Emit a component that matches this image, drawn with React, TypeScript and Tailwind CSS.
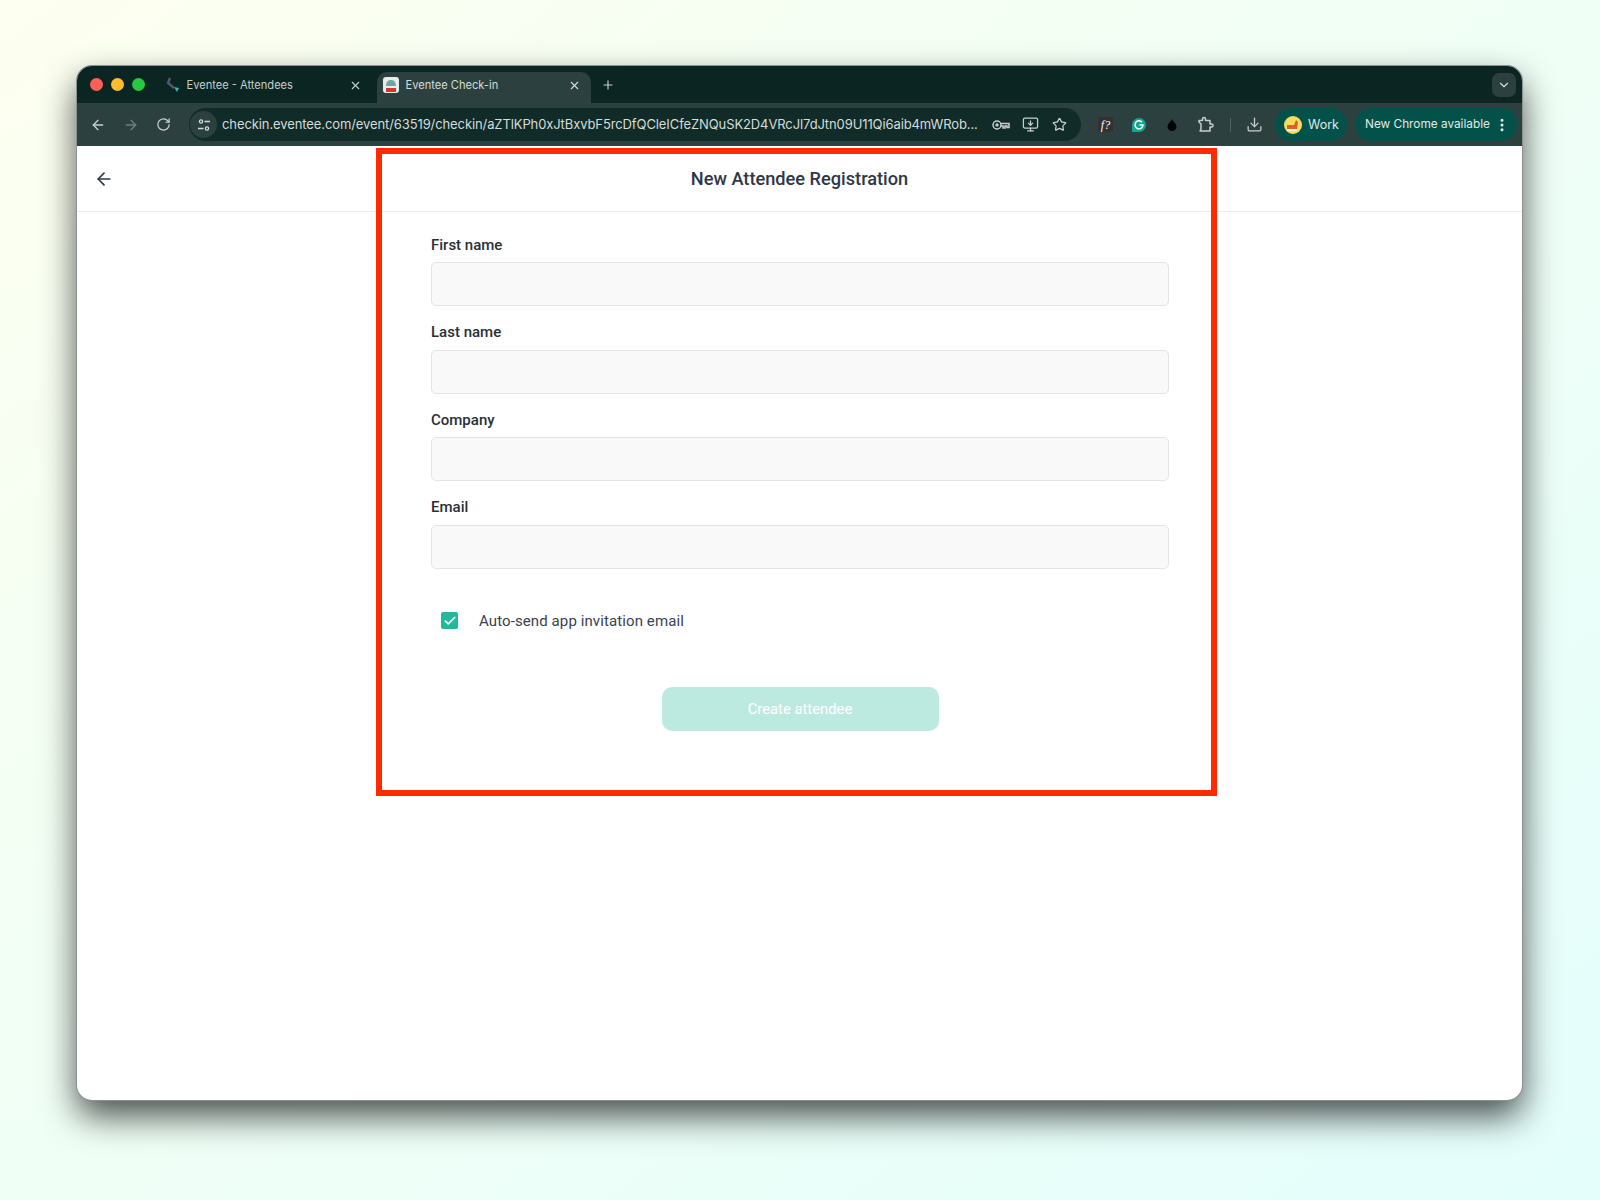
import { ArrowLeft, ArrowRight, RotateCw, X, Plus, ChevronDown, Star, Download, Check, EllipsisVertical, MonitorDown } from 'lucide-react'

const Field = ({ label }: { label: string }) => (
  <div className="flex flex-col">
    <label className="h-[43.5px] pt-[16px] text-[15px] leading-[20px] font-medium text-[#2a2f36]">{label}</label>
    <input className="h-[44px] w-full rounded-[5px] border border-[#e4e4e4] bg-[#f9f9f9]" />
  </div>
)

const TabIcon = () => (
  <svg width="16" height="16" viewBox="0 0 16 16">
    <rect width="16" height="16" rx="3" fill="#e8ecec" />
    <path d="M3 9c0-4 2-6 5-6s5 2 5 6z" fill="#6fa8a0" />
    <rect x="3" y="11" width="10" height="4" fill="#d8342c" />
  </svg>
)

const EventeeIcon = () => (
  <svg width="16" height="16" viewBox="0 0 16 16" fill="none">
    <path d="M5 1 3 6l6 5" stroke="#5a5670" strokeWidth="2.4" />
    <path d="M9 10l5 1-2 4z" fill="#3fb8a6" />
  </svg>
)

const Toolbar = () => (
  <div className="flex h-[43px] items-center bg-[#2c413f] pl-[13px] pr-[5px]">
    <ArrowLeft size={16} strokeWidth={2} className="text-[#c6cfcd]" />
    <ArrowRight size={16} strokeWidth={2} className="ml-[17px] text-[#6f817e]" />
    <RotateCw size={15} strokeWidth={2} className="ml-[17px] text-[#c6cfcd]" />
    <div className="ml-[18px] flex h-[33px] w-[892px] items-center rounded-full bg-[#102b28] pl-[1px] pr-[14px]">
      <div className="flex size-[27px] items-center justify-center rounded-full bg-[#2c413f]">
        <svg width="14" height="14" viewBox="0 0 14 14" fill="none" stroke="#d5dcda" strokeWidth="1.3">
          <circle cx="4" cy="3.5" r="1.6" />
          <path d="M7.5 3.500H13M1 10.500h5.500" />
          <circle cx="10" cy="10.500" r="1.600" />
        </svg>
      </div>
      <span className="ml-[5px] min-w-0 flex-1 text-[13px] tracking-[-0.1px] whitespace-nowrap text-[#d5dcda]">
        checkin.eventee.com/event/63519/checkin/aZTlKPh0xJtBxvbF5rcDfQCleICfeZNQuSK2D4VRcJl7dJtn09U11Qi6aib4mWRob...
      </span>
      <svg className="ml-[10px]" width="18" height="12" viewBox="0 0 18 12" fill="none" stroke="#c6cfcd" strokeWidth="1.500">
        <circle cx="5" cy="6" r="4" />
        <circle cx="5" cy="6" r="1" />
        <path d="M9 4.500h8v4h-2V7h-2v2h-2V7H9" />
      </svg>
      <MonitorDown size={17} strokeWidth={1.8} className="ml-[12px] text-[#c6cfcd]" />
      <Star size={15} strokeWidth={2} className="ml-[13px] text-[#c6cfcd]" />
    </div>
    <div className="ml-[17px] flex size-[15px] items-center justify-center rounded-[2px] bg-[#33302f] font-['Liberation_Serif',serif] text-[12px] leading-none text-white italic">
      f?
    </div>
    <svg className="ml-[18px]" width="16" height="16" viewBox="0 0 16 16" fill="none">
      <path d="M1 8a7 7 0 1 1 7 7H1z" fill="#15a48f" />
      <path d="M11 5.200A4 4 0 1 0 12 8H8.500" stroke="#fff" strokeWidth="1.500" />
    </svg>
    <svg className="ml-[20px]" width="10" height="13" viewBox="0 0 10 13">
      <path d="M5 0.500C5 3 9.500 5.500 9.500 8.500a4.500 4.500 0 0 1-9 0C0.500 5.500 5 3 5 0.500z" fill="#050505" />
    </svg>
    <svg className="ml-[20px]" width="17" height="17" viewBox="0 0 17 17" fill="none" stroke="#c6cfcd" strokeWidth="1.500" strokeLinejoin="round">
      <path d="M2 4.500h3.500V3a1.500 1.500 0 0 1 3 0v1.500H13V8h1.500a1.500 1.500 0 0 1 0 3H13v4H3l1-2V8L2 6z" />
    </svg>
    <div className="ml-[16px] h-[14px] w-px bg-[#53645f]" />
    <Download size={17} strokeWidth={1.8} className="ml-[15px] text-[#c6cfcd]" />
    <div className="ml-[12px] flex h-[33px] w-[72px] items-center rounded-full bg-[#02524a] pl-[9px] text-[12.5px] text-[#e1e8e6]">
      <svg width="18" height="18" viewBox="0 0 18 18">
        <circle cx="9" cy="9" r="9" fill="#f8dc5c" />
        <path d="M3 13V9h7l2-5 2 2-1 7z" fill="#d9622b" />
        <rect x="3" y="13" width="10" height="2" fill="#fff4d6" />
      </svg>
      <span className="ml-[6px] pt-px">Work</span>
    </div>
    <div className="ml-[8px] flex h-[33px] w-[162px] items-center rounded-full bg-[#02524a] pl-[10px] text-[11.8px] whitespace-nowrap text-[#e1e8e6]">
      <span className="pt-px">New Chrome available</span>
      <EllipsisVertical size={16} strokeWidth={2.5} className="ml-[4px] text-[#e1e8e6]" />
    </div>
  </div>
)

const TabBar = () => (
  <div className="flex h-[37px] items-end bg-[#0a2522] pr-[6px] font-['Inter',sans-serif]">
    <div className="flex h-[37px] items-center gap-[8.5px] pl-[13px]">
      <span className="size-[12.500px] rounded-full bg-[#ff5f57]" />
      <span className="size-[12.500px] rounded-full bg-[#febc2e]" />
      <span className="size-[12.500px] rounded-full bg-[#28c840]" />
    </div>
    <div className="ml-[16px] flex h-[31px] w-[216px] items-center pb-[5px] pl-[4px] pr-[15px] text-[11.1px] text-[#c6cfcd]">
      <EventeeIcon />
      <span className="ml-[6px] flex-1 truncate">Eventee - Attendees</span>
      <X size={13} strokeWidth={2} />
    </div>
    <div className="flex h-[31px] w-[214px] items-center rounded-t-[10px] bg-[#2c413f] pb-[5px] pl-[6px] pr-[10px] text-[11.1px] text-[#d5dcda]">
      <TabIcon />
      <span className="ml-[7px] flex-1 truncate">Eventee Check-in</span>
      <X size={13} strokeWidth={2} />
    </div>
    <Plus size={14} strokeWidth={2} className="mb-[11px] ml-[10px] text-[#c6cfcd]" />
    <div className="mb-[6px] ml-auto flex size-[24px] items-center justify-center rounded-[7px] bg-[#2c413f]">
      <ChevronDown size={14} strokeWidth={2} className="text-[#d5dcda]" />
    </div>
  </div>
)

const App = () => {
  return (
    <div className="flex h-[1200px] w-[1600px] justify-center overflow-hidden bg-gradient-to-br from-[#fdfff0] via-[#f0fff6] to-[#e4fefc] pt-[66px] font-['Roboto',sans-serif]">
      <div className="relative ml-[-1px] flex h-[1034px] w-[1445px] flex-col overflow-hidden rounded-[15px] bg-white shadow-[0_16px_35px_rgba(0,0,0,0.7)] ring-1 ring-[#8b9391]">
        <TabBar />
        <div className="font-['Inter',sans-serif]">
          <Toolbar />
        </div>

        <div className="flex h-[66px] items-center justify-center border-b border-[#ececec]">
          <button className="absolute left-[17px] text-[#2d3748]">
            <ArrowLeft size={20} strokeWidth={2} />
          </button>
          <h1 className="text-[18.2px] font-medium text-[#2d3748]">New Attendee Registration</h1>
        </div>

        <form className="ml-[354px] flex w-[738px] flex-col pt-[6.5px]">
          <Field label="First name" />
          <Field label="Last name" />
          <Field label="Company" />
          <Field label="Email" />

          <div className="mt-[41px] flex items-center pl-[10px]">
            <span className="flex size-[17px] items-center justify-center rounded-[2px] bg-[#22b99a]">
              <Check size={14} strokeWidth={3} className="text-white" />
            </span>
            <span className="ml-[21px] text-[15px] tracking-[0.1px] text-[#3a4150]">Auto-send app invitation email</span>
          </div>

          <button type="button" className="mx-auto mt-[55px] h-[44px] w-[277px] rounded-[10px] bg-[#bdeae0] text-[14.8px] text-white">
            Create attendee
          </button>
        </form>

        {/* annotation drawn over the screenshot */}
        <div className="absolute top-[82px] left-[299px] h-[648px] w-[841px] border-[6.500px] border-[#ff2a00]" />
      </div>
    </div>
  )
}

export default App
